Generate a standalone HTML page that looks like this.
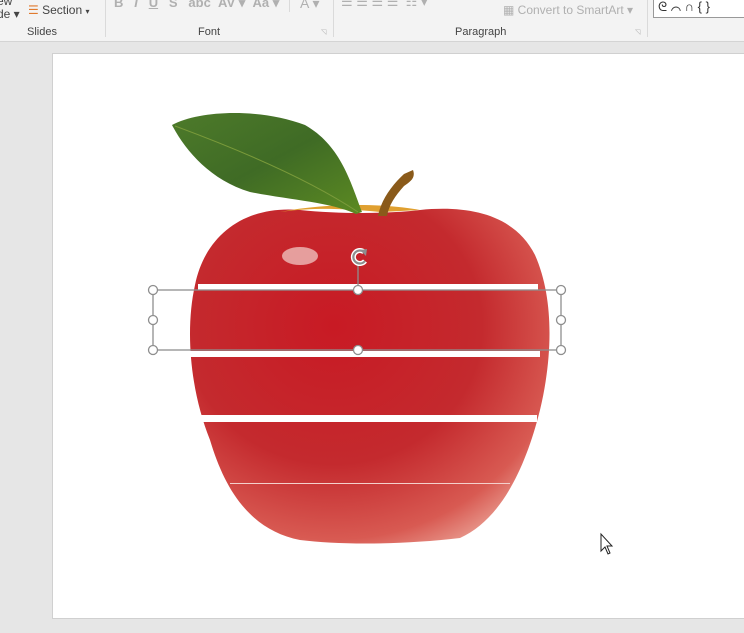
<!DOCTYPE html>
<html><head><style>
body{margin:0;width:744px;height:633px;overflow:hidden;background:#e6e6e6;font-family:"Liberation Sans",sans-serif;position:relative}
.rib{position:absolute;left:0;top:0;width:744px;height:41px;background:#f3f3f3;border-bottom:1px solid #d4d4d4}
.t{position:absolute;font-size:12px;color:#444;white-space:nowrap}
.g{color:#b0b0b0}
.sep{position:absolute;top:0;width:1px;height:37px;background:#dadada}
.slide{position:absolute;left:53px;top:54px;width:691px;height:564px;background:#fff;box-shadow:0 0 0 1px #d0d0d0}
</style></head><body>
<div class="rib">
<div class="t" style="left:-3px;top:-6px">ew</div>
<div class="t" style="left:-3px;top:7px">de ▾</div>
<div class="t" style="left:28px;top:3px"><span style="color:#e07a2e">☰</span> Section <span style="font-size:8px">▾</span></div>
<div class="t" style="left:27px;top:26px;font-size:11px">Slides</div>
<div class="sep" style="left:105px"></div>
<div class="t g" style="left:114px;top:-5px;font-size:13px;font-weight:bold">B &nbsp;&nbsp;<i>I</i>&nbsp;&nbsp; <u>U</u> &nbsp; S &nbsp; abc &nbsp;AV ▾ &nbsp;Aa ▾</div>
<div class="t g" style="left:300px;top:-5px;font-size:14px">A ▾</div>
<div class="sep" style="left:289px;height:12px"></div>
<div class="t" style="left:198px;top:26px;font-size:11px">Font</div>
<div class="t g" style="left:321px;top:28px;font-size:7px">◹</div>
<div class="sep" style="left:333px"></div>
<div class="t g" style="left:341px;top:-6px;font-size:13px">☰ ☰ ☰ ☰ &nbsp;☷ ▾</div>
<div class="t g" style="left:503px;top:3px">▦ Convert to SmartArt ▾</div>
<div class="t" style="left:455px;top:26px;font-size:11px">Paragraph</div>
<div class="t g" style="left:635px;top:28px;font-size:7px">◹</div>
<div class="sep" style="left:647px"></div>
<div style="position:absolute;left:653px;top:-2px;width:95px;height:18px;border:1px solid #999;background:#fff"><span class="t" style="left:4px;top:0;color:#333;font-size:13px">ᘓ ⌒ ∩ { }</span></div>
</div>
<div class="slide"></div>
<svg width="744" height="633" style="position:absolute;left:0;top:0">
<defs>
<radialGradient id="ap" cx="0.4" cy="0.35" r="0.75">
<stop offset="0" stop-color="#c81a24"/><stop offset="0.55" stop-color="#c42a2e"/><stop offset="0.85" stop-color="#d85a52"/><stop offset="1" stop-color="#eaa094"/>
</radialGradient>
<linearGradient id="lf" x1="0" y1="0" x2="1" y2="1"><stop offset="0" stop-color="#4d7a2a"/><stop offset="0.5" stop-color="#3f6b25"/><stop offset="1" stop-color="#5c8a22"/></linearGradient>
</defs>
<path d="M300 210 C245 205 205 235 195 285 C185 330 190 390 210 440 C225 490 250 530 300 540 C340 545 400 545 460 538 C500 520 525 470 540 410 C552 360 555 300 535 255 C515 215 470 205 420 210 C385 214 340 214 300 210Z" fill="url(#ap)"/>
<path d="M280 212 C320 206 360 210 380 212 L420 210 C390 204 330 202 280 212Z" fill="#e0a030"/>
<ellipse cx="300" cy="256" rx="18" ry="9" fill="#f0c8c4" opacity="0.75"/>
<path d="M378 216 C381 200 392 185 404 174 L413 170 C416 178 410 182 404 186 C395 196 389 205 387 216Z" fill="#8a5a1a"/>
<path d="M172 125 C200 110 260 108 305 125 C340 145 350 180 362 212 L356 214 C330 202 290 200 250 192 C210 180 185 150 172 125Z" fill="url(#lf)"/>
<path d="M175 126 C240 150 310 180 358 212" stroke="#7a9a3a" stroke-width="1" fill="none"/>
<rect x="198" y="284" width="340" height="6" fill="#fff"/>
<rect x="190" y="351" width="350" height="6" fill="#fff"/>
<rect x="195" y="415" width="342" height="7" fill="#fff"/>
<rect x="230" y="483" width="280" height="1" fill="#f4d0cc"/>
<g stroke="#8e8e8e" fill="#fff" stroke-width="1.3">
<rect x="153" y="290" width="408" height="60" fill="none"/>
<line x1="358" y1="264" x2="358" y2="290"/>
<circle cx="153" cy="290" r="4.5"/><circle cx="358" cy="290" r="4.5"/><circle cx="561" cy="290" r="4.5"/>
<circle cx="153" cy="320" r="4.5"/><circle cx="561" cy="320" r="4.5"/>
<circle cx="153" cy="350" r="4.5"/><circle cx="358" cy="350" r="4.5"/><circle cx="561" cy="350" r="4.5"/>
</g>
<path d="M364 252 A6.5 6.5 0 1 0 365 261" stroke="#fff" stroke-width="5" fill="none"/>
<path d="M364 252 A6.5 6.5 0 1 0 365 261" stroke="#8e8e8e" stroke-width="2.2" fill="none"/>
<path d="M360 250 L367 249 L366 256Z" fill="#8e8e8e"/>
<path d="M601 534 L601 551 L605 547 L608 554 L610 553 L607 546 L612 546Z" fill="#fff" stroke="#222" stroke-width="1"/>
</svg>
</body></html>
